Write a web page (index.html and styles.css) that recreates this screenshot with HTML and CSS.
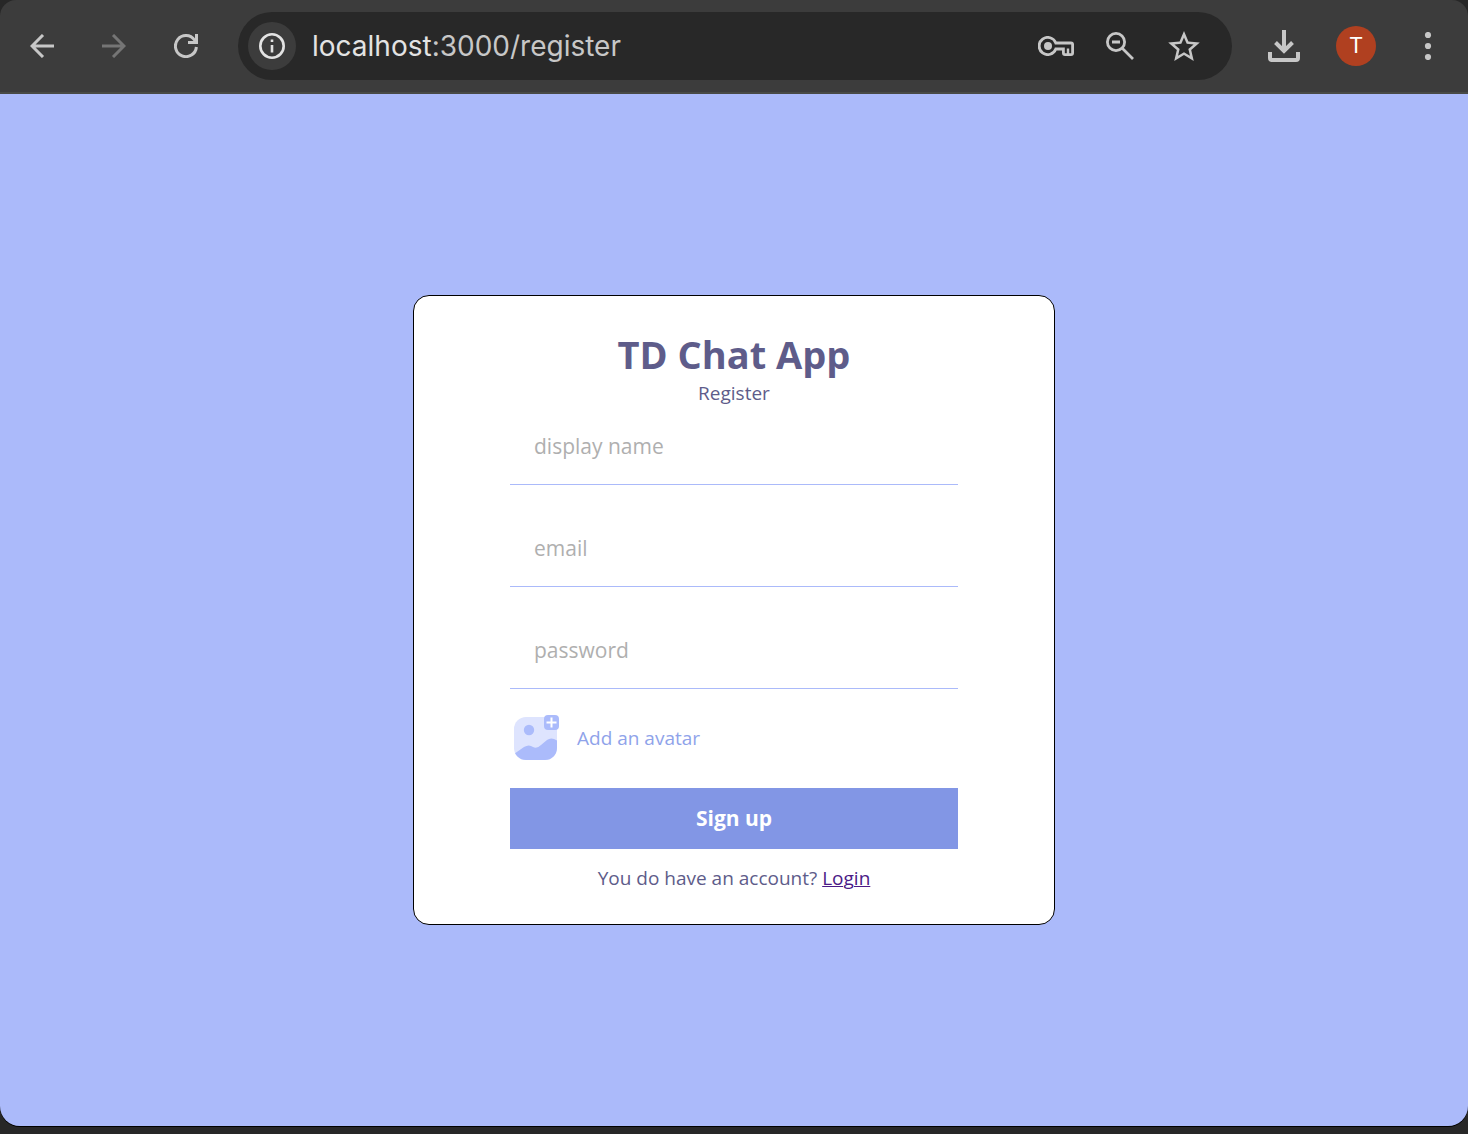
FILE: index.html
```html
<!DOCTYPE html>
<html lang="en">
<head>
<meta charset="utf-8">
<meta name="viewport" content="width=device-width, initial-scale=1">
<title>TD Chat App</title>
<link rel="stylesheet" href="styles.css">
</head>
<body>
<div class="window">
  <header class="toolbar">
    <nav class="nav" aria-label="History">
      <button class="icon-btn" type="button" aria-label="Back">
        <svg width="24" height="24" viewBox="0 0 24 24" fill="none" stroke="currentColor" stroke-width="3"><path d="M24 12H2M13 1L2 12L13 23"/></svg>
      </button>
      <button class="icon-btn dim" type="button" aria-label="Forward" disabled>
        <svg width="24" height="24" viewBox="0 0 24 24" fill="none" stroke="currentColor" stroke-width="3"><path d="M0 12H22M11 1L22 12L11 23"/></svg>
      </button>
      <button class="icon-btn" type="button" aria-label="Reload">
        <svg width="24" height="24" viewBox="0 0 24 24" fill="none" stroke="currentColor" stroke-width="3"><path d="M22.4 13A10.5 10.5 0 1 1 20.500 6L22 8.500M22.500 0V8.500H14"/></svg>
      </button>
    </nav>
    <div class="address">
      <button class="info" type="button" aria-label="Site information">
        <svg width="26" height="26" viewBox="0 0 26 26" fill="none" stroke="currentColor" stroke-width="2.600"><circle cx="13" cy="13" r="11.700"/><path d="M13 12V19.500M13 6.500V9"/></svg>
      </button>
      <p class="url"><span class="host">localhost</span>:3000/register</p>
      <button class="icon-btn" type="button" aria-label="Passwords">
        <svg width="36" height="20" viewBox="0 0 36 20" fill="none" stroke="currentColor" stroke-width="2.800"><path d="M17.800 7H33Q34.600 7 34.600 8.600V17Q34.600 18.600 33 18.600H27Q25.400 18.600 25.400 17V13H17.800A8.600 8.600 0 1 1 17.800 7Z"/><circle cx="10" cy="10" r="4" fill="currentColor" stroke="none"/><path stroke-width="2.400" d="M30 12.500V18"/></svg>
      </button>
      <button class="icon-btn" type="button" aria-label="Zoom out">
        <svg width="30" height="28" viewBox="0 0 30 28" fill="none" stroke="currentColor" stroke-width="2.800"><circle cx="10" cy="10" r="8.600"/><path d="M6 10H14M16 16L27 27"/></svg>
      </button>
      <button class="icon-btn" type="button" aria-label="Bookmark">
        <svg width="32" height="30" viewBox="2 2 20 19" fill="currentColor"><path d="M22 9.24l-7.19-.62L12 2 9.19 8.63 2 9.24l5.46 4.73L5.82 21 12 17.27 18.18 21l-1.630-7.030L22 9.24zM12 15.4l-3.760 2.270 1-4.280-3.320-2.880 4.380-.38L12 6.1l1.710 4.040 4.380.38-3.320 2.880 1 4.280L12 15.4z"/></svg>
      </button>
    </div>
    <div class="actions">
      <button class="icon-btn" type="button" aria-label="Downloads">
        <svg width="32" height="32" viewBox="0 0 32 32" fill="none" stroke="currentColor" stroke-width="4"><path d="M16 0V21M7.500 12.500L16 21L24.500 12.500M2 22V28Q2 30 4 30H28Q30 30 30 28V22"/></svg>
      </button>
      <button class="profile" type="button">T</button>
      <button class="icon-btn" type="button" aria-label="Menu">
        <svg width="8" height="28" viewBox="0 0 8 28" fill="currentColor"><circle cx="4" cy="3" r="3.100"/><circle cx="4" cy="14" r="3.100"/><circle cx="4" cy="25" r="3.100"/></svg>
      </button>
    </div>
  </header>
  <main class="page">
    <section class="card">
      <h1 class="title">TD Chat App</h1>
      <p class="subtitle">Register</p>
      <form class="form">
        <input class="field" type="text" placeholder="display name" aria-label="display name">
        <input class="field" type="email" placeholder="email" aria-label="email">
        <input class="field" type="password" placeholder="password" aria-label="password">
        <label class="avatar" for="avatar">
          <svg width="51" height="51" viewBox="0 0 51 51"><defs><clipPath id="frame"><rect x="4" y="4" width="43" height="43" rx="12"/></clipPath></defs><rect x="4" y="4" width="43" height="43" rx="12" fill="#dee4fe"/><circle cx="19" cy="17" r="5.200" fill="#abbbfb"/><path clip-path="url(#frame)" fill="#abbbfb" d="M4 41L14 34Q19 31 23 34Q27 36 31 32L37 27Q42 23 49 29V49H4Z"/><rect x="34" y="2" width="15" height="15" rx="4" fill="#abbbfb"/><path d="M41.500 4.500V14.500M36.500 9.500H46.500" stroke="#fff" stroke-width="2"/></svg>
          <span>Add an avatar</span>
        </label>
        <input class="file" type="file" id="avatar">
        <button class="submit" type="button">Sign up</button>
      </form>
      <p class="switch">You do have an account? <a class="login" href="#">Login</a></p>
    </section>
  </main>
</div>
</body>
</html>
```
FILE: styles.css
```css
* {
  box-sizing: border-box;
}

body {
  margin: 0;
  background: #272727;
  font-family: "Open Sans", sans-serif;
}

h1,
p {
  margin: 0;
}

button {
  padding: 0;
  border: 0;
  background: none;
  color: inherit;
  font: inherit;
}

svg {
  display: block;
}

.window {
  display: flex;
  flex-direction: column;
  min-height: calc(100vh - 8px);
  margin-bottom: 8px;
  overflow: hidden;
  border-radius: 16px 16px 20px 20px;
  box-shadow: 0 1px 0 #000;
}

.toolbar {
  display: flex;
  align-items: center;
  height: 94px;
  padding: 0 36px 0 30px;
  border-bottom: 2px solid #484a46;
  background: #3c3c3c;
  color: #c7c7c7;
}

.nav {
  display: flex;
  gap: 48px;
  margin-right: 40px;
}

.dim {
  color: #757575;
}

.address {
  display: flex;
  flex: 1;
  align-items: center;
  gap: 32px;
  height: 68px;
  padding: 0 32px 0 10px;
  border-radius: 34px;
  background: #282828;
}

.info {
  display: grid;
  place-items: center;
  width: 48px;
  height: 48px;
  margin-right: -16px;
  border-radius: 50%;
  background: #3c3c3c;
  color: #e3e3e3;
}

.url {
  flex: 1;
  font: 28px/40px Inter, sans-serif;
}

.host {
  color: #e3e3e3;
}

.actions {
  display: flex;
  align-items: center;
  gap: 36px;
  margin-left: 36px;
}

.profile {
  width: 40px;
  height: 40px;
  margin-right: 12px;
  border-radius: 50%;
  background: #b04020;
  color: #fff;
  font: 22px/40px Roboto, sans-serif;
}

.page {
  display: flex;
  flex: 1;
  align-items: center;
  justify-content: center;
  background: #abbafa;
}

.card {
  width: 642px;
  max-width: 100%;
  padding: 32px 96px;
  border: 1px solid #000;
  border-radius: 16px;
  background: #fff;
  color: #5e5c8a;
  font-size: 19px;
  line-height: 27px;
  text-align: center;
}

.title {
  font-size: 38px;
  line-height: 52px;
}

.form {
  display: flex;
  flex-direction: column;
  gap: 24px;
}

.field {
  width: 100%;
  height: 78px;
  padding: 24px;
  border: 0;
  border-bottom: 1px solid #abbafa;
  background: none;
  font: 21px "Open Sans", sans-serif;
}

.field::placeholder {
  color: #afafaf;
}

.avatar {
  display: flex;
  align-items: center;
  gap: 16px;
  color: #8fa3ea;
}

.file {
  display: none;
}

.submit {
  height: 61px;
  background: #8296e5;
  color: #fff;
  font-size: 21px;
  font-weight: 700;
}

.switch {
  margin-top: 16px;
}

.login {
  color: #4b1a87;
  text-decoration-thickness: 1px;
}
```
